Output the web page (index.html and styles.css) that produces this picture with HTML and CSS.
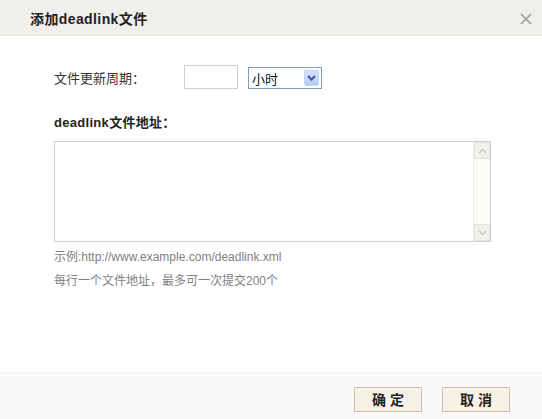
FILE: index.html
```html
<!DOCTYPE html>
<html>
<head>
<meta charset="utf-8">
<link rel="stylesheet" href="styles.css">
</head>
<body>
<div class="dialog">
  <div class="header">
    <span class="title">添加deadlink文件</span>
    <svg class="close" width="12" height="12" viewBox="0 0 12 12"><path d="M1 1L11 11M11 1L1 11" stroke="#9a9a9a" stroke-width="1.6" fill="none"/></svg>
  </div>
  <div class="content">
    <div class="row">
      <span class="label">文件更新周期：</span>
      <span class="input"></span>
      <span class="select">
        <span class="select-text">小时</span>
        <span class="select-btn"><svg width="9" height="6" viewBox="0 0 9 6"><path d="M1 1L4.5 4.5L8 1" stroke="#3a5597" stroke-width="2" fill="none"/></svg></span>
      </span>
    </div>
    <div class="label2">deadlink文件地址：</div>
    <div class="textarea">
      <div class="scroll">
        <span class="sbtn"><svg width="9" height="6" viewBox="0 0 9 6"><path d="M1 5L4.5 1.5L8 5" stroke="#c6c6be" stroke-width="1.4" fill="none"/></svg></span>
        <span class="sbtn"><svg width="9" height="6" viewBox="0 0 9 6"><path d="M1 1L4.5 4.5L8 1" stroke="#c6c6be" stroke-width="1.4" fill="none"/></svg></span>
      </div>
    </div>
    <div class="hint">示例:http://www.example.com/deadlink.xml</div>
    <div class="hint hint2">每行一个文件地址，最多可一次提交200个</div>
  </div>
  <div class="footer">
    <span class="btn">确 定</span>
    <span class="btn">取 消</span>
  </div>
</div>
</body>
</html>
```
FILE: styles.css
```css
html, body {
  margin: 0;
  padding: 0;
  background: #fff;
}
.dialog {
  width: 542px;
  height: 419px;
  display: flex;
  flex-direction: column;
  font-family: "Liberation Sans", "Noto Sans CJK SC", sans-serif;
  color: #333;
}
.header {
  height: 35px;
  background: #f1efeb;
  border-bottom: 1px solid #e8e5df;
  display: flex;
  align-items: center;
  justify-content: space-between;
  padding: 0 10px 0 30px;
  flex-shrink: 0;
}
.title {
  font-size: 14px;
  font-weight: bold;
  color: #222;
  letter-spacing: 0.4px;
}
.close {
  margin-top: 2px;
}
.content {
  flex: 1;
  padding-left: 54px;
}
.row {
  display: flex;
  align-items: center;
  margin-top: 29px;
  height: 24px;
}
.label {
  font-size: 13px;
  width: 130px;
  color: #333;
}
.input {
  width: 52px;
  height: 22px;
  border: 1px solid #cfcfcf;
  box-sizing: content-box;
  margin-right: 10px;
}
.select {
  width: 72px;
  height: 20px;
  border: 1px solid #7f9db9;
  display: flex;
  align-items: center;
  justify-content: space-between;
  margin-top: 2px;
}
.select-text {
  font-size: 13px;
  color: #111;
  padding-left: 3px;
}
.select-btn {
  width: 15px;
  height: 16px;
  margin-right: 2px;
  background: linear-gradient(#d6e2fb, #b6caf4);
  border: 1px solid #c3d3fd;
  border-radius: 2px;
  display: flex;
  align-items: center;
  justify-content: center;
  box-sizing: border-box;
}
.label2 {
  font-size: 13px;
  font-weight: bold;
  color: #222;
  margin-top: 23px;
  letter-spacing: 0.3px;
}
.textarea {
  width: 435px;
  height: 99px;
  border: 1px solid #cfcfcf;
  margin-top: 10px;
  display: flex;
  justify-content: flex-end;
}
.scroll {
  width: 16px;
  background: #fcfcf9;
  border-left: 1px solid #ecece6;
  display: flex;
  flex-direction: column;
  justify-content: space-between;
}
.sbtn {
  height: 15px;
  background: #f1f0ea;
  border: 1px solid #e4e3dc;
  display: flex;
  align-items: center;
  justify-content: center;
}
.hint {
  font-size: 12px;
  color: #808080;
  margin-top: 5px;
}
.hint2 {
  margin-top: 7px;
}
.footer {
  height: 47px;
  background: #fafaf9;
  border-top: 1px solid #f3f3f1;
  display: flex;
  align-items: center;
  justify-content: flex-end;
  gap: 20px;
  padding-right: 32px;
  flex-shrink: 0;
  padding-top: 6px;
  box-sizing: border-box;
}
.btn {
  width: 68px;
  height: 25px;
  box-sizing: border-box;
  border: 1px solid #c9c2b3;
  background: #f6f2e6;
  font-size: 14px;
  font-weight: bold;
  color: #222;
  display: flex;
  align-items: center;
  justify-content: center;
}
```
